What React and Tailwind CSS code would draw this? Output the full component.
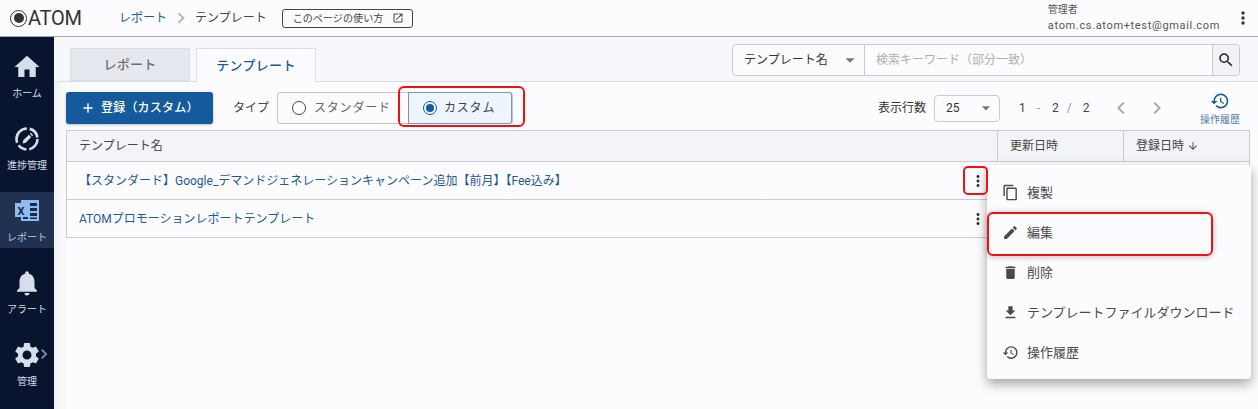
import {
  MdHome, MdContentCopy, MdEdit, MdDelete, MdFileDownload, MdHistory, MdMoreVert, MdSearch, MdAdd,
  MdNotifications, MdSettings, MdOpenInNew, MdArrowDropDown, MdChevronLeft, MdChevronRight, MdArrowDownward,
} from 'react-icons/md'

const FONT = "font-['Roboto','Noto_Sans_CJK_JP',sans-serif]"

function ProgressIcon() {
  return (
    <svg width="26" height="26" viewBox="0 0 26 26" fill="none">
      <circle cx="13" cy="13" r="10.5" stroke="#d8dee9" strokeWidth="2.6" strokeDasharray="14 3 9 3 20 3 12 3" />
      <path d="M8.5 17.5l.8-3.2 5.6-5.6 2.4 2.4-5.6 5.6z M15.8 7.8l1-1 2.4 2.4-1 1z" fill="#d8dee9" />
    </svg>
  )
}

function ExcelIcon() {
  return (
    <svg width="26" height="24" viewBox="0 0 26 24">
      <rect x="7" y="1" width="18" height="21" fill="#8fbcf0" />
      <path d="M16 4h7v3h-7zM16 9h7v3h-7zM16 14h7v3h-7zM9 4h5v3H9zM9 18h5v2H9zM16 18.500h7V20h-7z" fill="#16294a" />
      <rect x="1" y="4" width="13" height="14" fill="#8fbcf0" />
      <text x="3.500" y="15.500" fontSize="11" fontWeight="700" fill="#16294a" fontFamily="Roboto">X</text>
    </svg>
  )
}

function NavItem({ icon, label, active, top, arrow }) {
  return (
    <div className={`relative flex h-[56px] flex-col items-center ${top} ${active ? 'bg-[#20324f]' : ''}`}>
      <div className="flex h-[28px] items-center justify-center">{icon}</div>
      <div className={`mt-[6px] text-[10px] leading-[14px] ${active ? 'text-[#a9c9f2]' : 'text-[#d8dee9]'}`}>{label}</div>
      {arrow && <span className="absolute left-[34px] top-[8px] text-[#8a909c]"><MdChevronRight size={20} /></span>}
    </div>
  )
}

function MenuItem({ icon, label }) {
  return (
    <div className="flex h-[40px] items-center pl-[15px] text-[13px] text-[#4a4a4a]">
      <span className="flex w-[25px] text-[#4a4a4a]">{icon}</span>
      <span className="pt-[1px]">{label}</span>
    </div>
  )
}

export default function App() {
  return (
    <div className={`${FONT} relative flex h-[409px] w-[1258px] flex-col overflow-hidden bg-[#fcfcfe] text-[#333]`}>
      {/* Header */}
      <header className="flex h-[37px] shrink-0 items-center border-b border-[#a8a8a8] bg-[#fcfcfe]">
        <div className="ml-[10px] flex w-[109px] items-center">
          <span className="flex h-[17px] w-[17px] shrink-0 items-center justify-center rounded-full border-[1.5px] border-[#333]">
            <span className="h-[10px] w-[10px] rounded-full bg-[#333]" />
          </span>
          <span className="ml-[1px] text-[20px] leading-none tracking-[-0.2px] text-[#333]">ATOM</span>
        </div>
        <span className="text-[12px] text-[#1c5a96]">レポート</span>
        <MdChevronRight size={22} className="mx-[3px] text-[#b4b4b4]" />
        <span className="text-[12px] text-[#444]">テンプレート</span>
        <div className="ml-[15px] flex h-[19px] w-[131px] items-center rounded-[3px] border border-[#444] pl-[10px] text-[10px] tracking-[0.1px] text-[#444]">
          このページの使い方
          <MdOpenInNew size={12} className="ml-[9px]" />
        </div>
        <div className="ml-auto mr-[5px] flex items-center">
          <div className="mr-[13px] text-[#555]">
            <div className="text-[10px] leading-[14px]">管理者</div>
            <div className="mt-[2px] text-[11px] leading-[14px] tracking-[0.65px]">atom.cs.atom+test@gmail.com</div>
          </div>
          <MdMoreVert size={20} className="text-[#333]" />
        </div>
      </header>

      <div className="flex min-h-0 flex-1">
        {/* Sidebar */}
        <aside className="flex w-[54px] shrink-0 flex-col bg-[#09152f]">
          <NavItem top="mt-[11px] pt-[5px]" icon={<MdHome size={30} className="text-[#d8dee9]" />} label="ホーム" />
          <NavItem top="mt-[16px] pt-[5px]" icon={<ProgressIcon />} label="進捗管理" />
          <NavItem top="mt-[16px] pt-[5px]" active icon={<ExcelIcon />} label="レポート" />
          <NavItem top="mt-[16px] pt-[5px]" icon={<MdNotifications size={30} className="text-[#d8dee9]" />} label="アラート" />
          <NavItem top="mt-[16px] pt-[5px]" arrow icon={<MdSettings size={30} className="text-[#d8dee9]" />} label="管理" />
        </aside>

        <main className="min-w-0 flex-1 bg-gradient-to-r from-[#f1f2f6] from-0% to-[#fcfcfe] to-[1.2%]">
          {/* Tabs and search */}
          <div className="flex h-[45px] items-start justify-between border-b border-[#d9dde6] bg-[#f7f8fc] pl-[16px] pr-[18px]">
            <div className="mt-[11px] flex gap-[6px]">
              <div className="flex h-[33px] w-[120px] items-center justify-center border border-[#dadde5] bg-[#e6e8ef] text-[13px] font-medium tracking-[0.3px] text-[#6e6e6e]">レポート</div>
              <div className="flex h-[34px] w-[120px] items-center justify-center border border-b-0 border-[#dadde5] bg-[#fcfcfe] text-[13px] font-medium tracking-[0.3px] text-[#1c5a96]">テンプレート</div>
            </div>
            <div className="mt-[7px] flex h-[32px] w-[508px] rounded-[4px] border border-[#c9cbd2] bg-[#fcfcfe]">
              <div className="flex w-[132px] shrink-0 items-center border-r border-[#c9cbd2] pl-[11px] text-[12px] text-[#333]">
                テンプレート名
                <MdArrowDropDown size={22} className="ml-[11px] text-[#777]" />
              </div>
              <div className="flex-1 pl-[11px] text-[12px] leading-[30px] text-[#b0b0b0]">検索キーワード（部分一致）</div>
              <div className="flex w-[27px] items-center justify-center rounded-r-[4px] border-l border-[#c9cbd2] bg-[#f1f2f5]">
                <MdSearch size={18} className="text-[#222]" />
              </div>
            </div>
          </div>

          {/* Toolbar */}
          <div className="flex h-[48px] items-center pl-[12px] pr-[18px] pt-[4px]">
            <button className="flex h-[32px] w-[147px] items-center rounded-[3px] bg-[#155a9a] pl-[14px] text-[12px] font-medium tracking-[0.2px] text-white shadow-[0_1px_3px_rgba(0,0,0,0.25)]">
              <MdAdd size={16} className="mr-[5px]" />
              登録（カスタム）
            </button>
            <span className="ml-[20px] text-[12px] text-[#444]">タイプ</span>
            <div className="ml-[8px] flex h-[32px] w-[236px] rounded-[3px] border border-[#c4c4c4] bg-[#fcfcfe]">
              <div className="flex w-[130px] items-center pl-[14px] text-[12px] tracking-[0.8px] text-[#666]">
                <span className="mr-[8px] h-[14px] w-[14px] rounded-full border-[1.5px] border-[#444]" />
                スタンダード
              </div>
              <div className="-my-px flex flex-1 items-center rounded-r-[3px] border border-[#6f9ac6] border-l-[#8a8f98] bg-[#eef5fc] pl-[14px] text-[12px] tracking-[0.8px] text-[#444]">
                <span className="mr-[7px] flex h-[14px] w-[14px] items-center justify-center rounded-full border-[1.5px] border-[#155a9a]">
                  <span className="h-[8px] w-[8px] rounded-full bg-[#155a9a]" />
                </span>
                カスタム
              </div>
            </div>
            <span className="ml-auto text-[12px] text-[#333]">表示行数</span>
            <div className="ml-[8px] flex h-[27px] w-[66px] items-center justify-between rounded-[4px] border border-[#c9cbd2] pl-[11px] pr-[3px] text-[12px] text-[#333]">
              25
              <MdArrowDropDown size={20} className="text-[#777]" />
            </div>
            <div className="ml-[19px] flex w-[70px] text-[12px] text-[#444]">
              <span>1</span>
              <span className="ml-[11px] text-[#999]">-</span>
              <span className="ml-[12px]">2</span>
              <span className="ml-[8px] text-[#999]">/</span>
              <span className="ml-[11px]">2</span>
            </div>
            <MdChevronLeft size={24} className="ml-[20px] text-[#aaa]" />
            <MdChevronRight size={24} className="ml-[12px] text-[#aaa]" />
            <div className="ml-[31px] flex w-[40px] flex-col items-center text-[#1c5a96]">
              <MdHistory size={20} />
              <span className="mt-[3px] whitespace-nowrap text-[10px] leading-[12px] text-[#4d7ba8]">操作履歴</span>
            </div>
          </div>

          {/* Table */}
          <div className="ml-[12px] mr-[8px] border border-[#c9cbd2] text-[12px]">
            <div className="flex h-[31px] border-b border-[#c9cbd2] bg-[#f3f4f8] leading-[30px] text-[#444]">
              <div className="flex-1 pl-[12px]">テンプレート名</div>
              <div className="w-[126px] border-l border-[#c9cbd2] pl-[12px]">更新日時</div>
              <div className="flex w-[126px] items-center border-l border-[#c9cbd2] pl-[12px]">
                登録日時
                <MdArrowDownward size={12} className="ml-[3px] text-[#555]" />
              </div>
            </div>
            <div className="flex h-[38px] items-center border-b border-[#c9cbd2] pl-[12px] text-[#1c5a96]">
              【スタンダード】Google_デマンドジェネレーションキャンペーン追加【前月】【Fee込み】
              <span className="ml-auto mr-[262px] flex"><MdMoreVert size={18} className="text-[#333]" /></span>
            </div>
            <div className="flex h-[37px] items-center pl-[12px] text-[#1c5a96]">
              ATOMプロモーションレポートテンプレート
              <span className="ml-auto mr-[262px] flex"><MdMoreVert size={18} className="text-[#333]" /></span>
            </div>
          </div>
        </main>
      </div>

      {/* Context menu */}
      <div className="absolute left-[987px] top-[165px] w-[264px] rounded-[4px] bg-[#fcfcfe] py-[7px] shadow-[0_5px_12px_rgba(0,0,0,0.35)]">
        <MenuItem icon={<MdContentCopy size={17} />} label="複製" />
        <MenuItem icon={<MdEdit size={17} />} label="編集" />
        <MenuItem icon={<MdDelete size={17} />} label="削除" />
        <MenuItem icon={<MdFileDownload size={17} />} label="テンプレートファイルダウンロード" />
        <MenuItem icon={<MdHistory size={17} />} label="操作履歴" />
      </div>

      {/* Red annotation boxes */}
      <div className="absolute left-[398px] top-[86px] h-[41px] w-[127px] rounded-[6px] border-2 border-[#f01010]" />
      <div className="absolute left-[963px] top-[166px] h-[29px] w-[25px] rounded-[5px] border-2 border-[#f01010]" />
      <div className="absolute left-[987px] top-[212px] h-[44px] w-[226px] rounded-[6px] border-2 border-[#f01010] shadow-[0_1px_6px_rgba(0,0,0,0.25)]" />
    </div>
  )
}
